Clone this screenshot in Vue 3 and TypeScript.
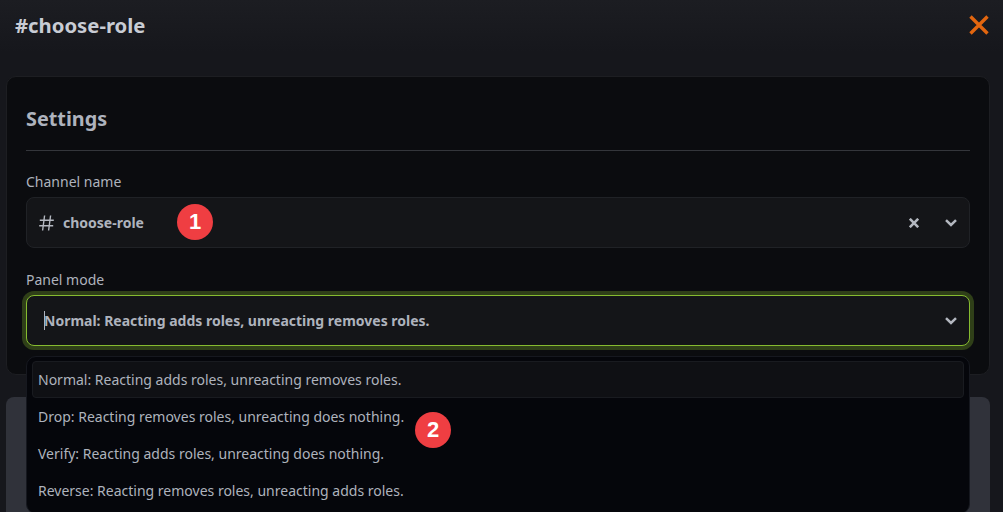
<template>
  <div class="page">
    <header class="topbar">
      <h1>#choose-role</h1>
      <button class="close" aria-label="Close">
        <svg width="22" height="22" viewBox="0 0 22 22"><path d="M2.5 2.5 19.5 19.5M19.5 2.5 2.5 19.5" /></svg>
      </button>
    </header>

    <section class="card">
      <h2>Settings</h2>
      <hr />

      <label>Channel name</label>
      <div class="input">
        <svg class="hash" width="15" height="16" viewBox="0 0 15 16"><path d="M5.6 .5 3.600 15.500M11.600 .5 9.600 15.500M.8 5.200H14.800M.2 10.800H14.200" /></svg>
        <span class="value">choose-role</span>
        <span class="badge first">1</span>
        <svg class="clear" width="10" height="10" viewBox="0 0 10 10"><path d="M.8 .8 9.200 9.200M9.200 .8 .8 9.200" /></svg>
        <svg class="chev" width="12" height="8" viewBox="0 0 12 8"><path d="M1 1.200 6 6l5-4.800" /></svg>
      </div>

      <label class="second">Panel mode</label>
      <div class="input focused">
        <span class="caret"></span>
        <span class="value">{{ modes[0] }}</span>
        <svg class="chev" width="12" height="8" viewBox="0 0 12 8"><path d="M1 1.200 6 6l5-4.800" /></svg>
      </div>
    </section>

    <div class="below"></div>

    <ul class="menu">
      <li v-for="(mode, i) in modes" :key="mode" :class="{ active: i === 0 }">{{ mode }}</li>
      <span class="badge second-badge">2</span>
    </ul>
  </div>
</template>

<script setup lang="ts">
const modes: string[] = [
  'Normal: Reacting adds roles, unreacting removes roles.',
  'Drop: Reacting removes roles, unreacting does nothing.',
  'Verify: Reacting adds roles, unreacting does nothing.',
  'Reverse: Reacting removes roles, unreacting adds roles.',
]
</script>

<style>
html,
body {
  margin: 0;
  background: #16171c;
  overflow: hidden;
}
</style>

<style scoped>
.page {
  position: relative;
  width: 1003px;
  height: 512px;
  overflow: hidden;
  box-sizing: border-box;
  padding: 0 13px 0 6px;
  font-family: "Noto Sans", sans-serif;
  color: #aeb3bd;
  background: #16171c;
}

.topbar {
  display: flex;
  align-items: center;
  justify-content: space-between;
  box-sizing: border-box;
  height: 52px;
  margin: 0 -13px 24px -6px;
  padding: 0 13px 3px 15px;
  background: linear-gradient(#1c1d22, #16171c);
}

.topbar h1 {
  margin: 0;
  font-size: 20.3px;
  line-height: 46px;
  font-weight: 700;
  color: #c8ccd4;
}

.close {
  display: flex;
  padding: 0;
  border: 0;
  background: none;
}

.close path {
  fill: none;
  stroke: #e2660f;
  stroke-width: 3.4;
}

.card {
  box-sizing: border-box;
  height: 299px;
  padding: 24px 19px 0 19px;
  border: 1px solid #1d1e22;
  border-radius: 10px;
  background: #0b0c0f;
}

.card h2 {
  margin: 0;
  font-size: 19.8px;
  line-height: 36px;
  font-weight: 700;
  color: #aeb3bd;
}

.card hr {
  height: 1px;
  margin: 13px 0 21px;
  border: 0;
  background: #34363b;
}

.card label {
  display: block;
  font-size: 14px;
  line-height: 19px;
  color: #aeb3bd;
}

.card label.second {
  margin-top: 22px;
}

.input {
  position: relative;
  display: flex;
  align-items: center;
  box-sizing: border-box;
  height: 51px;
  margin-top: 6px;
  padding: 0 12px;
  border: 1px solid #202226;
  border-radius: 8px;
  background: #141518;
}

.input .value {
  font-size: 14px;
  font-weight: 700;
  color: #aeb3bd;
  margin-left: 9px;
}

.hash {
  stroke: #b4b8c0;
  stroke-width: 1.4;
  fill: none;
}

.clear {
  margin-left: auto;
  margin-right: 26px;
  fill: none;
  stroke: #b4b8c0;
  stroke-width: 2.6;
}

.chev {
  fill: none;
  stroke: #b4b8c0;
  stroke-width: 2.5;
}

.focused {
  padding-left: 17px;
  border-color: #86bb30;
  box-shadow: 0 0 0 4px #2f3f18;
}

.focused .value {
  margin-left: -1px;
}

.focused .chev {
  margin-left: auto;
}

.caret {
  flex: none;
  width: 1px;
  height: 19px;
  background: #aeb3bd;
}

.below {
  height: 160px;
  margin-top: 22px;
  border-radius: 8px;
  background: #30323a;
}

.menu {
  position: absolute;
  left: 26px;
  top: 356px;
  width: 944px;
  height: 158px;
  box-sizing: border-box;
  margin: 0;
  padding: 4px 5px;
  list-style: none;
  border: 1px solid #16181f;
  border-radius: 10px;
  background: #05060b;
}

.menu li {
  box-sizing: border-box;
  height: 37px;
  padding: 0 5px;
  font-size: 14px;
  line-height: 36px;
  color: #aeb3bd;
  border: 1px solid transparent;
  border-radius: 4px;
}

.menu li.active {
  border-color: #191b20;
  background: #0f1014;
}

.badge {
  position: absolute;
  display: flex;
  align-items: center;
  justify-content: center;
  width: 36px;
  height: 36px;
  border-radius: 50%;
  background: #ef3e42;
  color: #fff;
  font-family: "Liberation Sans", sans-serif;
  font-size: 22px;
  font-weight: 700;
}

.badge.first {
  left: 150px;
  top: 6px;
}

.second-badge {
  left: 388px;
  top: 55px;
}
</style>
